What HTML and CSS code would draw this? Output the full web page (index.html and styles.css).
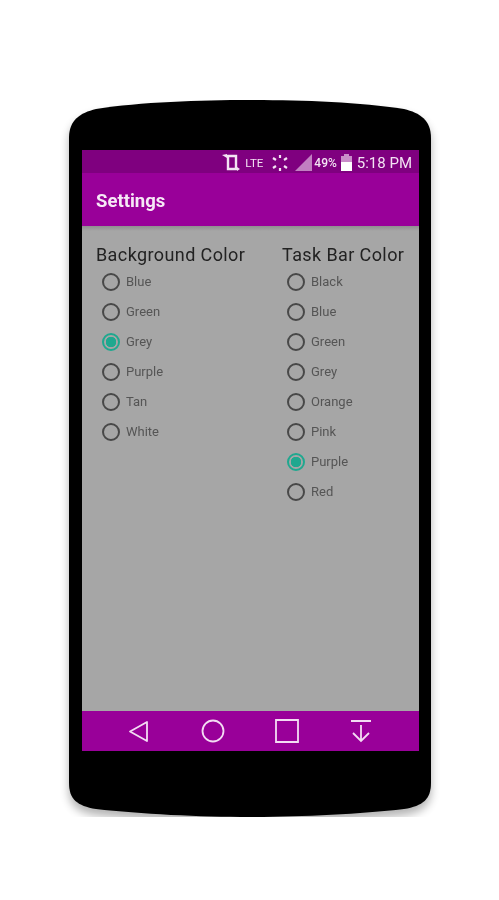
FILE: index.html
```html
<!DOCTYPE html>
<html lang="en">
<head>
    <meta charset="UTF-8">
    <title>Settings</title>
    <link rel="stylesheet" href="styles.css">
</head>
<body>
    <div class="phone">
        <svg class="phone-body" width="380" height="750" viewBox="0 0 380 750">
            <defs>
                <filter id="soft" x="-10%" y="-10%" width="120%" height="120%"><feGaussianBlur stdDeviation="5"/></filter>
            </defs>
            <path d="M9 38C9 20 20 13 36 9C80 2 140 0 190 0C240 0 300 2 344 9C360 13 371 20 371 38L371 683C371 699 363 706 344 709C300 714 240 717 190 717C140 717 80 714 36 709C17 706 9 699 9 683Z" transform="translate(0 6)" fill="#000" opacity=".3" filter="url(#soft)"/>
            <path d="M9 38C9 20 20 13 36 9C80 2 140 0 190 0C240 0 300 2 344 9C360 13 371 20 371 38L371 683C371 699 363 706 344 709C300 714 240 717 190 717C140 717 80 714 36 709C17 706 9 699 9 683Z" fill="#000"/>
        </svg>
        <div class="screen">
            <div class="status-bar">
                <svg class="ic-rotate" width="20" height="19" viewBox="0 0 20 19">
                    <path d="M6 3H15V16H7V4" fill="none" stroke="#f3e3f3" stroke-width="2.4"/>
                    <path d="M1 2L6 1V5Z M16 14L19 16L16 18Z" fill="#f3e3f3"/>
                </svg>
                <span class="lte">LTE</span>
                <svg class="ic-spark" width="18" height="18" viewBox="0 0 18 18" stroke="#f3e3f3" stroke-width="2.2">
                    <path d="M9 1V4M9 14V17M2 4L5 6M13 12L16 14M2 14L5 12M13 6L16 4"/>
                </svg>
                <svg class="ic-signal" width="17" height="17" viewBox="0 0 17 17">
                    <path d="M0 17L17 0V17Z" fill="#c27fc2"/>
                </svg>
                <span class="pct">49%</span>
                <svg class="ic-battery" width="11" height="17" viewBox="0 0 11 17">
                    <path d="M3 0H8V2H11V8H0V2H3Z" fill="#c98cc9"/>
                    <path d="M0 8H11V17H0Z" fill="#fff"/>
                </svg>
                <span class="clock">5:18 PM</span>
            </div>
            <div class="app-bar">Settings</div>
            <div class="content">
                <section class="col col-bg">
                    <h2>Background Color</h2>
                    <ul class="radios">
                        <li><i class="radio"></i><span>Blue</span></li>
                        <li><i class="radio"></i><span>Green</span></li>
                        <li><i class="radio on"></i><span>Grey</span></li>
                        <li><i class="radio"></i><span>Purple</span></li>
                        <li><i class="radio"></i><span>Tan</span></li>
                        <li><i class="radio"></i><span>White</span></li>
                    </ul>
                </section>
                <section class="col col-bar">
                    <h2>Task Bar Color</h2>
                    <ul class="radios">
                        <li><i class="radio"></i><span>Black</span></li>
                        <li><i class="radio"></i><span>Blue</span></li>
                        <li><i class="radio"></i><span>Green</span></li>
                        <li><i class="radio"></i><span>Grey</span></li>
                        <li><i class="radio"></i><span>Orange</span></li>
                        <li><i class="radio"></i><span>Pink</span></li>
                        <li><i class="radio on"></i><span>Purple</span></li>
                        <li><i class="radio"></i><span>Red</span></li>
                    </ul>
                </section>
            </div>
            <div class="nav-bar">
                <svg width="24" height="24" viewBox="0 0 24 24" fill="none" stroke="#f3dcf3" stroke-width="1.8">
                    <path d="M20 3V22L3 12.5Z" stroke-linejoin="round"/>
                </svg>
                <svg width="24" height="24" viewBox="0 0 24 24" fill="none" stroke="#f3dcf3" stroke-width="1.8">
                    <circle cx="12" cy="12" r="10.5"/>
                </svg>
                <svg width="24" height="24" viewBox="0 0 24 24" fill="none" stroke="#f3dcf3" stroke-width="1.8">
                    <path d="M1 1H23V23H1Z"/>
                </svg>
                <svg width="24" height="24" viewBox="0 0 24 24" fill="none" stroke="#f3dcf3" stroke-width="1.8">
                    <path d="M2 2H22M12 6V22M4 14L12 22L20 14"/>
                </svg>
            </div>
        </div>
    </div>
</body>
</html>
```

FILE: styles.css
```css
*{
    margin: 0;
    padding: 0;
    box-sizing: border-box;
}
body{
    background-color: #fff;
    font-family: Roboto, "Liberation Sans", sans-serif;
}
li{
    list-style: none;
}
.phone{
    position: relative;
    width: 362px;
    height: 717px;
    margin: 100px 0 0 69px;
    padding: 50px 12px 66px 13px;
}
.phone-body{
    position: absolute;
    left: -9px;
    top: 0;
}
.screen{
    position: relative;
    height: 601px;
    display: flex;
    flex-direction: column;
    filter: blur(.5px);
}
.status-bar{
    height: 23px;
    background-color: #7f007f;
    color: #f3e3f3;
    display: flex;
    align-items: center;
    justify-content: flex-end;
    padding: 2px 7px 0 0;
}
.lte{
    font-size: 11.5px;
    margin-left: 4px;
}
.ic-spark{
    margin-left: 8px;
}
.ic-signal{
    margin-left: 6px;
}
.pct{
    font-size: 12px;
    font-weight: 500;
    margin-left: 2px;
}
.ic-battery{
    margin-left: 4px;
}
.clock{
    font-size: 15px;
    margin-left: 5px;
}
.app-bar{
    height: 53px;
    background-color: #990099;
    color: #f6e8f6;
    font-size: 18.5px;
    font-weight: 700;
    line-height: 57px;
    padding-left: 14px;
}
.content{
    flex: 1;
    display: flex;
    background: linear-gradient(#8f8f8f, #a6a6a6 5px);
    padding-top: 18px;
}
.col-bg{
    width: 200px;
    padding-left: 14px;
}
.col h2{
    font-size: 18px;
    font-weight: 400;
    letter-spacing: .4px;
    line-height: 22px;
    color: #222;
    white-space: nowrap;
}
.radios{
    padding: 1px 0 0 6px;
}
.col-bar .radios{
    padding-left: 5px;
}
.radios li{
    height: 30px;
    display: flex;
    align-items: center;
    font-size: 13px;
    color: #555;
}
.radios span{
    padding-bottom: 2px;
}
.radio{
    width: 18px;
    height: 18px;
    border: 2px solid #484848;
    border-radius: 50%;
    margin-right: 6px;
}
.radio.on{
    border-color: #1fa88f;
    background: radial-gradient(circle, #1fa88f 0, #1fa88f 5px, transparent 5.5px);
}
.nav-bar{
    height: 40px;
    background-color: #990099;
    display: flex;
    align-items: center;
    padding-left: 45px;
    gap: 50px;
}
```
